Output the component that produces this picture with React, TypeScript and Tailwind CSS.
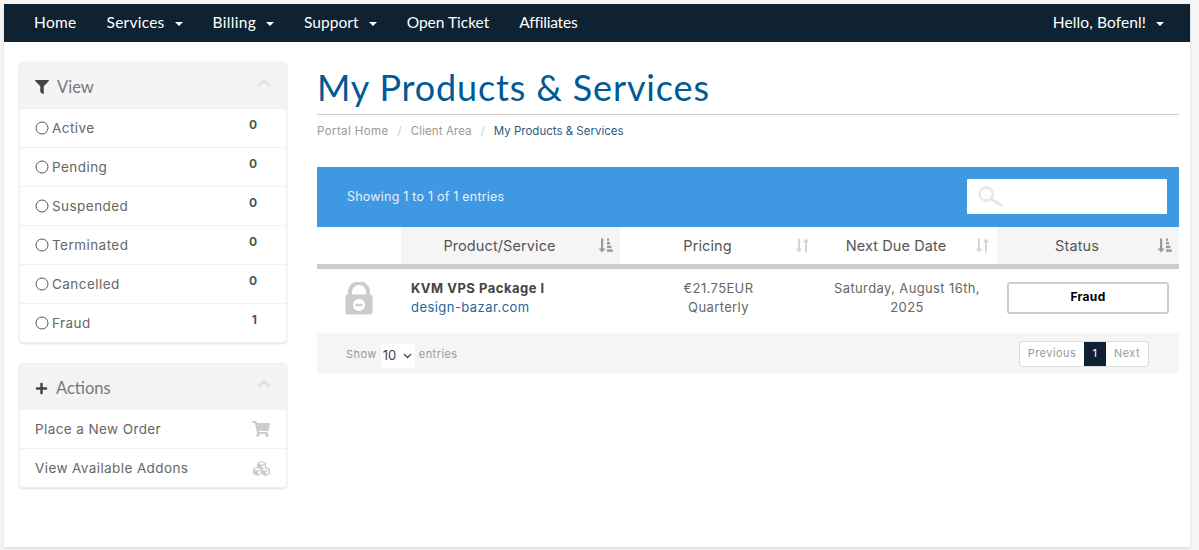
import React from "react";
import { FaFilter, FaPlus, FaShoppingCart, FaCubes } from "react-icons/fa";

const M = "font-['Inter','Liberation_Sans',sans-serif]";
const R = "font-['Lato','Liberation_Sans',sans-serif]";

function Caret() {
  return <span className="ml-[10px] inline-block w-0 h-0 border-x-[4px] border-x-transparent border-t-[4px] border-t-white align-middle" />;
}

function Chevron() {
  return (
    <svg width="16" height="10" viewBox="0 0 16 10" fill="none" className="mt-[-9px]">
      <path d="M2 8 L8 2.5 L14 8" stroke="#e2e2e2" strokeWidth="2.6" />
    </svg>
  );
}

function SortAmount() {
  return (
    <svg width="15" height="15" viewBox="0 0 15 15" fill="#999">
      <path d="M3 0.5h2.2v10H7.6L4.1 14.5 0.6 10.5H3z" />
      <rect x="9" y="0.5" width="2" height="2.4" />
      <rect x="9" y="4" width="3" height="2.4" />
      <rect x="9" y="7.7" width="4.4" height="2.4" />
      <rect x="9" y="11.4" width="5.8" height="2.4" />
    </svg>
  );
}

function SortBoth() {
  return (
    <svg width="15" height="15" viewBox="0 0 15 15" fill="#d6d6d6">
      <path d="M3 0.5h2v10h2.2L4 14.5 0.8 10.5H3z" />
      <path d="M10 14.5h2v-10h2.2L11 0.5 7.8 4.5H10z" />
    </svg>
  );
}

function LockIcon() {
  return (
    <svg width="28" height="33" viewBox="0 0 28 33">
      <path d="M5 14V10a9 9 0 0 1 18 0V14" fill="none" stroke="#cccccc" strokeWidth="4" />
      <rect x="0.5" y="12.5" width="27" height="20" rx="2.5" fill="#cccccc" />
      <circle cx="14" cy="23" r="6" fill="#ffffff" />
      <rect x="10.5" y="21.8" width="7" height="2.4" fill="#cccccc" />
    </svg>
  );
}

function SearchIcon() {
  return (
    <svg width="25" height="21" viewBox="0 0 25 21" fill="none">
      <circle cx="8.2" cy="8" r="6.6" stroke="#e8e8e8" strokeWidth="2.6" />
      <path d="M13.5 12.8 L23 19" stroke="#e8e8e8" strokeWidth="3.4" strokeLinecap="round" />
    </svg>
  );
}

function Panel({ icon, title, children }: { icon: React.ReactNode; title: string; children: React.ReactNode }) {
  return (
    <div className="w-[268px] rounded-[4px] bg-white border border-[#eeeeee] shadow-[0_1px_2px_rgba(0,0,0,0.12)] overflow-hidden">
      <div className="h-[45px] bg-[#f4f4f4] flex items-center justify-between pt-[3px] pl-[15px] pr-[14px]">
        <div className="flex items-center gap-[8px]">
          {icon}
          <span className={`${R} text-[16.5px] text-[#777777]`}>{title}</span>
        </div>
        <Chevron />
      </div>
      {children}
    </div>
  );
}

function ViewRow({ label, count }: { label: string; count: number }) {
  return (
    <div className="h-[39px] border-t border-[#f1f1f1] first:border-t-0 flex items-center justify-between pl-[15px] pr-[29px]">
      <div className="flex items-center gap-[3px] text-[13.5px] text-[#666666] tracking-[0.45px]">
        <svg width="14" height="14" viewBox="0 0 14 14" fill="none">
          <circle cx="7" cy="7" r="6" stroke="#555555" strokeWidth="1" />
        </svg>
        <span>{label}</span>
      </div>
      <span className="text-[12px] font-bold text-[#555555] -mt-[7px]">{count}</span>
    </div>
  );
}

function ActionRow({ label, icon }: { label: string; icon: React.ReactNode }) {
  return (
    <div className="h-[39px] border-t border-[#f1f1f1] first:border-t-0 flex items-center justify-between pl-[15px] pr-[16px] text-[13.5px] text-[#666666] tracking-[0.4px]">
      <span>{label}</span>
      {icon}
    </div>
  );
}

function Head({ label, sorted, icon }: { label: string; sorted?: boolean; icon: React.ReactNode }) {
  return (
    <div className={`relative h-[37px] flex items-center justify-center pr-[22px] text-[14.5px] text-[#555555] tracking-[0.1px] ${sorted ? "bg-[#f5f5f5]" : ""}`}>
      <span>{label}</span>
      <span className="absolute right-[7px] top-[11px]">{icon}</span>
    </div>
  );
}

export default function App() {
  return (
    <div className={`${M} h-[550px] bg-[#f5f5f5] pt-[4px] pl-[4px] pr-[9px] pb-[3px] overflow-hidden`}>
      <div className="h-[543px] bg-white shadow-[0_1px_3px_rgba(0,0,0,0.12)]">
        <nav className={`${R} h-[38px] bg-[#0f2231] text-white text-[15.5px] flex items-center justify-between pl-[30px] pr-[26px]`}>
          <div className="flex items-center gap-[30px]">
            <span className="tracking-[0.3px]">Home</span>
            <span className="tracking-[0.25px]">Services<Caret /></span>
            <span className="tracking-[0.3px]">Billing<Caret /></span>
            <span className="tracking-[0.05px]">Support<Caret /></span>
            <span>Open Ticket</span>
            <span className="tracking-[-0.2px]">Affiliates</span>
          </div>
          <span className="tracking-[0.1px]">Hello, Bofenl!<Caret /></span>
        </nav>

        <div className="flex pl-[15px] pr-[11px] pt-[20px] gap-[30px]">
          <aside className="flex flex-col gap-[20px]">
            <Panel icon={<FaFilter size={14} color="#444444" />} title="View">
              <ViewRow label="Active" count={0} />
              <ViewRow label="Pending" count={0} />
              <ViewRow label="Suspended" count={0} />
              <ViewRow label="Terminated" count={0} />
              <ViewRow label="Cancelled" count={0} />
              <ViewRow label="Fraud" count={1} />
            </Panel>
            <Panel icon={<FaPlus size={13} color="#444444" />} title="Actions">
              <ActionRow label="Place a New Order" icon={<FaShoppingCart size={18} color="#cccccc" />} />
              <ActionRow label="View Available Addons" icon={<FaCubes size={17} color="#cccccc" />} />
            </Panel>
          </aside>

          <main className="w-[862px]">
            <h1 className={`${R} text-[36px] leading-[40px] text-[#005a96] mt-[5px] pb-[7px] border-b border-[#cccccc] tracking-[0.85px]`}>
              My Products &amp; Services
            </h1>
            <div className="flex items-center h-[16px] mt-[9px] text-[11.5px] text-[#999999]">
              <span className="tracking-[0.4px]">Portal Home</span>
              <span className="mx-[9px] text-[#cccccc]">/</span>
              <span className="tracking-[0.1px]">Client Area</span>
              <span className="mx-[9px] text-[#cccccc]">/</span>
              <span className="text-[#2a5c85]">My Products &amp; Services</span>
            </div>

            <div className="mt-[27px] h-[60px] bg-[#3e98e2] flex items-center justify-between pl-[30px] pr-[12px]">
              <span className="text-[12.5px] text-[#e6f1fb] tracking-[0.22px]">Showing 1 to 1 of 1 entries</span>
              <div className="w-[200px] h-[35px] mb-[1px] bg-white rounded-[1px] flex items-center pl-[11px]">
                <SearchIcon />
              </div>
            </div>

            <div className="grid grid-cols-[84px_219px_197px_180px_182px] border-b-[5px] border-[#cccccc]">
              <div />
              <Head label="Product/Service" sorted icon={<SortAmount />} />
              <Head label="Pricing" icon={<SortBoth />} />
              <Head label="Next Due Date" icon={<SortBoth />} />
              <Head label="Status" sorted icon={<SortAmount />} />
            </div>

            <div className="grid grid-cols-[84px_219px_197px_180px_182px] h-[64px] text-[13px] text-[#666666] leading-[19px] tracking-[0.38px]">
              <div className="flex justify-center pt-[13px]">
                <LockIcon />
              </div>
              <div className="pl-[10px] pt-[10px]">
                <div className="font-bold text-[#444444] tracking-[0.5px]">KVM VPS Package I</div>
                <div className="text-[#23689b] tracking-[0.45px]">design-bazar.com</div>
              </div>
              <div className="text-center pt-[10px]">
                <div>€21.75EUR</div>
                <div>Quarterly</div>
              </div>
              <div className="text-center pt-[10px] px-[10px]">Saturday, August 16th, 2025</div>
              <div className="pl-[10px] pr-[10px] pt-[13px]">
                <div className="h-[32px] pb-[4px] border-2 border-[#cccccc] rounded-[3px] flex items-center justify-center text-[12px] font-bold text-black tracking-[0.3px]">
                  Fraud
                </div>
              </div>
            </div>

            <div className="h-[40px] bg-[#f5f5f5] flex items-center justify-between pt-[2px] pl-[29px] pr-[30px] text-[11px] text-[#999999] tracking-[0.45px]">
              <div className="flex items-center">
                <span>Show</span>
                <div className="ml-[4px] mr-[4px] mt-[3px] w-[34px] h-[24px] bg-white rounded-[2px] flex items-center justify-between pl-[2px] pr-[3px] text-[13px] text-[#444444] tracking-normal">
                  <span>10</span>
                  <svg width="9" height="6" viewBox="0 0 9 6" fill="none">
                    <path d="M1 1 L4.5 4.5 L8 1" stroke="#444444" strokeWidth="1.3" />
                  </svg>
                </div>
                <span>entries</span>
              </div>
              <div className="flex h-[26px] -mt-[1px] items-stretch rounded-[3px] border border-[#dddddd] bg-white overflow-hidden">
                <span className="w-[64px] flex items-center justify-center">Previous</span>
                <span className="w-[22px] -my-px flex items-center justify-center bg-[#0f2231] text-white">1</span>
                <span className="w-[42px] flex items-center justify-center">Next</span>
              </div>
            </div>
          </main>
        </div>
      </div>
    </div>
  );
}
